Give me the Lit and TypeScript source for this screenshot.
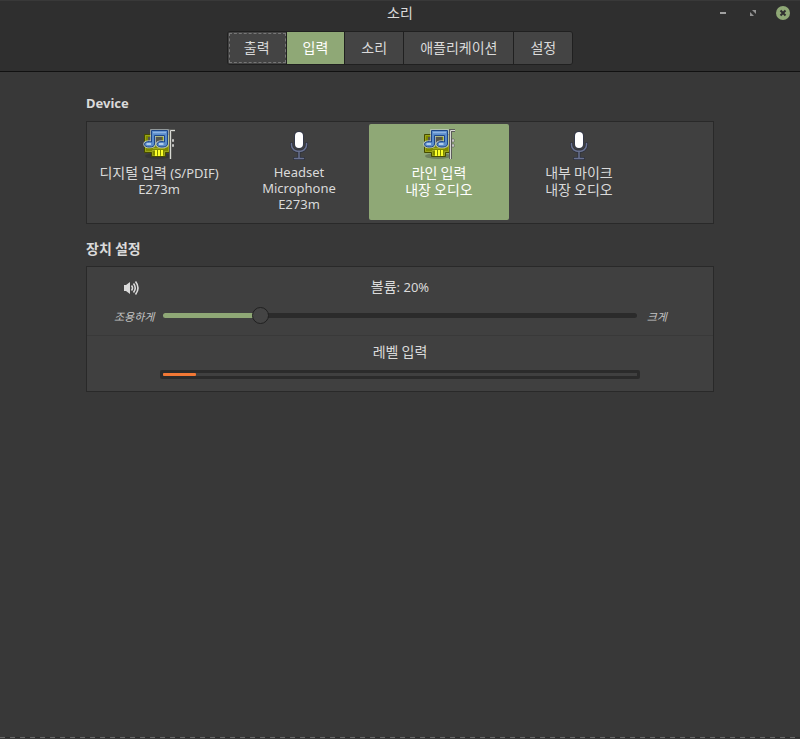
import { LitElement, html, css, svg } from "lit";
import { customElement, state } from "lit/decorators.js";
import { classMap } from "lit/directives/class-map.js";
import { styleMap } from "lit/directives/style-map.js";

interface Device {
  name: string;
  origin: string;
  kind: "card" | "mic";
}

const DEVICES: Device[] = [
  { name: "디지털 입력 (S/PDIF)", origin: "E273m", kind: "card" },
  { name: "Headset Microphone", origin: "E273m", kind: "mic" },
  { name: "라인 입력", origin: "내장 오디오", kind: "card" },
  { name: "내부 마이크", origin: "내장 오디오", kind: "mic" },
];

const TABS = ["출력", "입력", "소리", "애플리케이션", "설정"];

// Two beamed notes as one closed outline.
const NOTES =
  "M8.5 2.5H24.5V16C24.5 18 22 19 19 19C16 19 14 18 14 16.3C14 14.6 16 13.5 19 13.5C20 13.5 21 13.7 21.5 14" +
  "V7.5H11.5V16C11.5 18 9.5 19 6.5 19C3.5 19 1.5 18 1.5 16.3C1.5 14.6 3.5 13.5 6.5 13.5C7.5 13.5 8 13.7 8.5 14Z";

const cardIcon = html`<svg class="device-icon" viewBox="0 0 32 32" aria-hidden="true">
  ${svg`
    <ellipse cx="15" cy="28" rx="13" ry="3" fill="#222" opacity=".3"/>
    <path d="M1.5 6.5H26.5V24.5H22.5V28.5H8.5V24.5H1.5Z" fill="#7e8900" stroke="#464b00"/>
    <path d="M2.5 7.5H25.5V23.5H21.5V27.5H9.5V23.5H2.5Z" fill="none" stroke="#9aa41c"/>
    <rect x="5" y="9" width="14" height="6" fill="#55564c"/>
    <path d="M10 20.5H22M9 22.5H12" stroke="#a0aa20"/>
    <path d="M13 22V28M16 22V28M19 22V28" stroke="#fcff28" stroke-width="2"/>
    <path d="M27.5 31V2.5H32" fill="none" stroke="#5c5d5a" stroke-width="3"/>
    <path d="M27.5 31V2.5H32" fill="none" stroke="#d8d9d4"/>
    <path d="M29 11H31V14H29ZM29 16H31V19H29Z" fill="#eeeeec" stroke="#444" stroke-width=".5"/>
    <path d="${NOTES}" fill="none" stroke="#c9d6d8" stroke-width="2.6" opacity=".8"/>
    <path d="${NOTES}" fill="#5a8ccb" stroke="#1f4788"/>
    <path d="M10 4.5H23" stroke="#8fb4e2" stroke-width="1.5"/>
    <path d="M3.5 16H8M16 16H20.5" stroke="#cfe2f6" stroke-width="1.5"/>
  `}
</svg>`;

const micIcon = html`<svg class="device-icon" viewBox="0 0 32 32" aria-hidden="true">
  ${svg`
    <g fill="none" stroke="#2b2f3c" stroke-width="3" stroke-linecap="round">
      <path d="M8.5 15.5V17C8.5 25.5 23.5 25.5 23.5 17V15.5M16 23V30M11.5 30.5H20.5"/>
    </g>
    <g fill="none" stroke="#69718f" stroke-width="1.5" stroke-linecap="round">
      <path d="M8.5 15.5V17C8.5 25.5 23.5 25.5 23.5 17V15.5M16 23V30M11.5 30.5H20.5"/>
    </g>
    <rect x="11" y="3" width="10" height="18" rx="5" fill="#33384a"/>
    <rect x="12" y="4" width="8" height="16" rx="4" fill="#fff"/>
  `}
</svg>`;

@customElement("app-root")
export class AppRoot extends LitElement {
  @state() private tab = 1;
  @state() private device = 2;
  @state() private volume = 19.5;
  private level = 7;

  static styles = css`
    :host {
      display: flex;
      flex-direction: column;
      box-sizing: border-box;
      min-height: 100vh;
      background: #383838;
      color: #dadada;
      font: 13px/16px "Noto Sans", "Noto Sans CJK KR", sans-serif;
    }
    * { box-sizing: border-box; }
    button { font: inherit; color: inherit; margin: 0; padding: 0; border: 0; background: none; }
    .ko { font-family: "Noto Sans CJK KR", sans-serif; font-size: 14px; }
    header {
      background: #2f2f2f;
      border-top: 1px solid #393939;
      border-bottom: 1px solid #111;
    }
    .titlebar {
      display: grid;
      grid-template-columns: 1fr auto 1fr;
      align-items: center;
      height: 24px;
      margin-bottom: 6px;
    }
    .titlebar h1 { grid-column: 2; margin: 0; font-weight: normal; line-height: 22px; padding-bottom: 2px; }
    .window-buttons { display: flex; justify-content: flex-end; gap: 14px; padding-right: 9px; }
    .window-buttons button, .window-buttons svg { display: block; width: 16px; height: 16px; }
    .tabs { display: flex; justify-content: center; padding-bottom: 6px; }
    .strip { display: flex; border: 1px solid #202020; border-radius: 3px; overflow: hidden; }
    .tab {
      height: 32px;
      padding: 0 16px 2px;
      background: #444;
      line-height: 30px;
      border-right: 1px solid #202020;
    }
    .tab:last-child { border-right: 0; }
    .tab.first { outline: 1px dashed #777; outline-offset: -2px; }
    .tab.on { background: #8fa876; color: #fff; }
    main { flex: 1; padding: 21px 86px 0; }
    h2 { margin: 0; font-size: 13px; font-weight: bold; line-height: 20px; }
    h2.ko { font-size: 14px; line-height: 18px; }
    .panel { background: #404040; border: 1px solid #292929; }
    .devices { display: flex; flex-wrap: wrap; margin: 8px 0 15px; padding: 2px 2px 3px; }
    .device {
      display: flex;
      flex-direction: column;
      align-items: center;
      width: 140px;
      min-height: 96px;
      padding: 4px 8px;
      border-radius: 2px;
    }
    .device.on { background: #8fa876; color: #fff; }
    .device-icon { width: 32px; height: 32px; margin-bottom: 4px; }
    .label { max-width: 120px; }
    .label.mic-name { max-width: 90px; }
    .settings { margin-top: 9px; }
    .volume { padding: 11px 44px 9px 27px; border-bottom: 1px solid #393939; }
    .caption {
      display: grid;
      grid-template-columns: 49px 1fr 32px;
      align-items: center;
      height: 18px;
    }
    .caption svg { width: 16px; height: 16px; margin-left: 9px; }
    .caption label { text-align: center; padding-bottom: 3px; }
    .control {
      display: grid;
      grid-template-columns: 49px 1fr 32px;
      align-items: center;
      height: 20px;
      margin-top: 10px;
    }
    .hint { font-size: 11px; font-style: italic; text-align: left; color: #c4c4c4; padding-top: 1px; }
    .hint.high { text-align: right; padding-right: 2px; }
    input[type="range"] {
      display: block;
      appearance: none;
      width: 100%;
      height: 18px;
      margin: 0 0 2px;
      background: none;
    }
    input::-webkit-slider-runnable-track {
      height: 5px;
      border-radius: 3px;
      background: linear-gradient(to right, #8fa876 var(--fill), #2b2b2b var(--fill));
    }
    input::-webkit-slider-thumb {
      appearance: none;
      width: 17px;
      height: 17px;
      margin-top: -6px;
      border: 1px solid #202020;
      border-radius: 50%;
      background: #444;
    }
    .input-level { padding: 6px 73px 12px; text-align: center; }
    .level-title { line-height: 18px; margin-bottom: 10px; }
    .meter { height: 9px; padding: 3px; border-radius: 2px; background: #2b2b2b; }
    .meter-track { height: 3px; background: #404040; }
    .meter-fill { height: 3px; border-radius: 1px; background: #f27835; }
    footer {
      height: 1px;
      margin-bottom: 1px;
      background: repeating-linear-gradient(to right, #686868 0 5px, #2a2a2a 5px 10px);
    }
  `;

  private text(value: string) {
    return value
      .split(/([\u3131-\uD79D]+(?: [\u3131-\uD79D]+)*)/)
      .filter(Boolean)
      .map((part) => (/[\u3131-\uD79D]/.test(part) ? html`<span class="ko">${part}</span>` : part));
  }

  render() {
    return html`
      <header>
        <div class="titlebar">
          <h1 class="ko">소리</h1>
          <div class="window-buttons">
            <button aria-label="최소화">
              <svg viewBox="0 0 16 16"><path d="M5 8H11" stroke="#a0a0a0" stroke-width="2" /></svg>
            </button>
            <button aria-label="최대화">
              <svg viewBox="0 0 16 16"><path d="M7 5H11V9ZM5 7V11H9Z" fill="#929292" /></svg>
            </button>
            <button aria-label="닫기">
              <svg viewBox="0 0 16 16">
                <circle cx="8" cy="8" r="7" fill="#8fa876" />
                <path d="M5.5 5.5L10.5 10.5M10.5 5.5L5.5 10.5" stroke="#2f2f2f" stroke-width="2" />
              </svg>
            </button>
          </div>
        </div>
        <nav class="tabs">
          <div class="strip">
            ${TABS.map(
              (name, i) => html`<button
                class=${classMap({ tab: true, ko: true, first: i === 0, on: i === this.tab })}
                @click=${() => (this.tab = i)}
              >${name}</button>`
            )}
          </div>
        </nav>
      </header>
      <main>
        <h2>Device</h2>
        <div class="panel devices">
          ${DEVICES.map(
            (d, i) => html`<button
              class=${classMap({ device: true, on: i === this.device })}
              @click=${() => (this.device = i)}
            >
              ${d.kind === "card" ? cardIcon : micIcon}
              <span class=${classMap({ label: true, "mic-name": d.kind === "mic" })}>${this.text(d.name)}</span>
              <span>${this.text(d.origin)}</span>
            </button>`
          )}
        </div>
        <h2 class="ko">장치 설정</h2>
        <div class="panel settings">
          <div class="volume">
            <div class="caption">
              <svg viewBox="0 0 16 16" aria-hidden="true">
                <path d="M1 5H3L7 2V14L3 11H1Z" fill="#dadada" />
                <path
                  d="M8.5 5.5Q10.5 8 8.5 10.5M10.5 3.5Q14 8 10.5 12.5M12.5 1.5Q17.5 8 12.5 14.5"
                  fill="none" stroke="#dadada" stroke-width="1.6"
                />
              </svg>
              <label for="volume">${this.text("볼륨")}: ${Math.round(this.volume)}%</label>
            </div>
            <div class="control">
              <span class="hint">조용하게</span>
              <input
                id="volume" type="range" min="0" max="100" step="any"
                .value=${String(this.volume)}
                style=${styleMap({ "--fill": `${this.volume}%` })}
                @input=${(e: Event) => (this.volume = Number((e.target as HTMLInputElement).value))}
              />
              <span class="hint high">크게</span>
            </div>
          </div>
          <div class="input-level">
            <div class="level-title ko">레벨 입력</div>
            <div class="meter" role="meter" aria-label="레벨 입력" aria-valuenow=${this.level} aria-valuemin="0" aria-valuemax="100">
              <div class="meter-track">
                <div class="meter-fill" style=${styleMap({ width: `${this.level}%` })}></div>
              </div>
            </div>
          </div>
        </div>
      </main>
      <footer></footer>
    `;
  }
}
